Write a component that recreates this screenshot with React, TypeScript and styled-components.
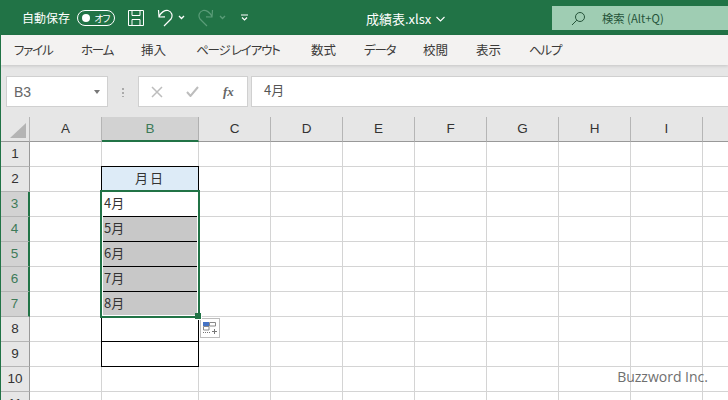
import React from 'react';
import styled, { createGlobalStyle } from 'styled-components';

const Global = createGlobalStyle`
  html, body { margin: 0; padding: 0; background: #fff; }
  body { font-family: "Noto Sans CJK JP", "Liberation Sans", sans-serif; }
`;
const Page = styled.div`
  width: 728px; height: 400px; overflow: hidden; position: relative; display: flex; flex-direction: column; background: #fff;
  border-left: 1px solid #217346; box-sizing: border-box;
`;
const TitleBar = styled.div`
  height: 35px; background: #217346; display: flex; align-items: center; color: #fff; flex: none;
`;
const AutoSave = styled.span`
  font-size: 12px; margin-left: 21px; width: 55px; white-space: nowrap; line-height: 34px;
`;
const Toggle = styled.span`
  width: 38px; height: 16px; border: 1px solid #fff; border-radius: 9px; box-sizing: border-box;
  display: flex; align-items: center; justify-content: space-between; padding: 0 4px 0 4px; font-size: 9.500px; font-feature-settings: "palt"; letter-spacing: -.5px;
  &::before { content: ""; width: 8px; height: 8px; background: #fff; border-radius: 50%; }
`;
const QatIcon = styled.svg<{ $ml: number }>`
  margin-left: ${p => p.$ml}px; flex: none; display: block;
`;
const FileName = styled.span`
  position: absolute; left: 365px; top: 0; font-size: 13px; line-height: 37px; display: flex; align-items: center; gap: 5px;
`;
const SearchBox = styled.div`
  position: absolute; left: 551px; top: 6px; width: 176px; height: 24px; background: #9fcdb3; color: #26543a;
  display: flex; align-items: center; font-size: 11.300px;
  & > span { margin-left: 16px; }
  & > svg { margin-left: 19px; }
`;
const Ribbon = styled.nav`
  height: 30px; background: #f3f2f1; display: flex; align-items: center; flex: none; font-size: 12.500px; color: #3b3a39;
  font-feature-settings: "palt"; box-shadow: 0 1px 3px rgba(0,0,0,.15); position: relative; z-index: 1;
`;
const Tab = styled.span<{ $w: number; $kana?: boolean }>`
  width: ${p => p.$w}px; flex: none; white-space: nowrap; line-height: 30px;
  letter-spacing: ${p => p.$kana ? '-1.2px' : '0'};
  &:first-child { margin-left: 13px; }
`;
const FormulaArea = styled.div`
  height: 52px; flex: none; background: #e6e6e6; display: flex; align-items: flex-start; padding-top: 11px; box-sizing: border-box;
`;
const NameBox = styled.div`
  width: 102px; height: 31px; margin-left: 5px; background: #fff; border: 1px solid #d0d0d0; box-sizing: border-box;
  display: flex; align-items: center; justify-content: space-between; padding: 1px 7px 0; font-size: 14px; color: #666; font-family: "Liberation Sans", sans-serif;
  &::after { content: ""; border: 3.500px solid transparent; border-top: 4px solid #777; border-bottom: 0; }
`;
const Dots = styled.div`
  width: 2px; height: 10px; margin: 11px 14px 0 14px; background: radial-gradient(circle, #aaa 1px, transparent 1px) 0 0 / 2px 4px;
`;
const FxBox = styled.div`
  width: 110px; height: 31px; background: #fff; border: 1px solid #d0d0d0; box-sizing: border-box; display: flex; align-items: center;
  padding-left: 12px; gap: 23px;
`;
const FxGlyph = styled.span`
  font-family: "Liberation Serif", serif; font-style: italic; font-weight: bold; font-size: 13px; color: #666; margin-left: 1px;
`;
const FormulaInput = styled.div`
  flex: 1; height: 31px; margin-left: 3px; background: #fff; border: 1px solid #d0d0d0; border-right: 0; box-sizing: border-box;
  font-size: 13px; color: #555; padding-left: 12px; line-height: 25px;
`;
const Sheet = styled.div`
  position: relative; flex: none; display: grid;
  grid-template-columns: 29px 72px 97px repeat(8, 72px);
  grid-template-rows: repeat(12, 25px);
`;
const Corner = styled.div`
  background: #e6e6e6; border-right: 1px solid #b5b5b5; border-bottom: 1px solid #999; box-sizing: border-box; position: relative;
  &::after { content: ""; position: absolute; right: 3px; bottom: 3px; width: 0; height: 0; border-style: solid; border-width: 0 0 15px 16px; border-color: transparent transparent #b4b4b4 transparent; }
`;
const ColHead = styled.div<{ $on?: boolean }>`
  background: ${p => p.$on ? '#d2d2d2' : '#e6e6e6'}; color: ${p => p.$on ? '#3d7a58' : '#333'};
  border-right: 1px solid ${p => p.$on ? '#b0b0b0' : '#b5b5b5'}; border-bottom: ${p => p.$on ? '2px solid #217346' : '1px solid #999'};
  box-sizing: border-box; font-size: 13.500px; font-family: "Liberation Sans", sans-serif; text-align: center; line-height: 24px;
`;
const RowHead = styled.div<{ $on?: boolean }>`
  background: ${p => p.$on ? '#d2d2d2' : '#e6e6e6'}; color: ${p => p.$on ? '#3d7a58' : '#333'};
  border-right: ${p => p.$on ? '2px solid #217346' : '1px solid #999'}; border-bottom: 1px solid #b5b5b5;
  box-sizing: border-box; font-size: 13.500px; font-family: "Liberation Sans", sans-serif; text-align: center; line-height: 24px;
`;
const Cell = styled.div<{ $fill?: string; $box?: boolean; $center?: boolean }>`
  background: ${p => p.$fill || '#fff'}; box-sizing: border-box; font-size: 13px; color: #333; line-height: 22px;
  padding-left: 2px; white-space: nowrap;
  border-right: 1px solid ${p => p.$box ? '#000' : '#d4d4d4'}; border-bottom: 1px solid ${p => p.$box ? '#000' : '#d4d4d4'};
  ${p => p.$box ? 'box-shadow: -1px 0 0 #000, 0 -1px 0 #000, -1px -1px 0 #000; position: relative;' : ''}
  ${p => p.$center ? 'text-align: center; letter-spacing: 2px; padding-left: 0;' : ''}
`;
const Selection = styled.div`
  position: absolute; grid-column: 3 / 4; grid-row: 4 / 9; top: -2px; left: -2px; right: -1px; bottom: -1px;
  border: 2px solid #217346; box-shadow: inset 0 0 0 1px #fff; pointer-events: none; z-index: 2;
  &::after { content: ""; position: absolute; right: -3px; bottom: -3px; width: 6px; height: 6px; background: #217346; box-shadow: 1px 1px 0 #fff; }
`;
const QuickAnalysis = styled.svg`
  position: absolute; grid-column: 4 / 5; grid-row: 9 / 10; left: 1px; top: 1px;
`;
const Watermark = styled.div`
  position: absolute; right: 20px; bottom: 14px; font-family: "Open Sans", "Liberation Sans", sans-serif; font-size: 14px; line-height: 18px; color: #6f6f6f; z-index: 3;
`;

const cols = ['A','B','C','D','E','F','G','H','I',''];
const months: Record<number,string> = { 3: '4月', 4: '5月', 5: '6月', 6: '7月', 7: '8月' };

export default function App() {
  const rows = Array.from({ length: 11 }, (_, i) => i + 1);
  return (
    <Page>
      <Global />
      <TitleBar>
        <AutoSave>自動保存</AutoSave>
        <Toggle>オフ</Toggle>
        <QatIcon $ml={13} width="16" height="16" viewBox="0 0 16 16" fill="none" stroke="#fff" strokeWidth="1">
          <path d="M.5.5h15v15H.5zM4 .5v5h8v-5M4 15.5v-6h8v6" />
        </QatIcon>
        <QatIcon $ml={13} width="16" height="18" viewBox="0 0 16 18" fill="none" stroke="#fff" strokeWidth="1.200">
          <path d="M1.500 1 2 8l6-.2M2 7.500C4 3 8 1 11 1.500 15 2.500 16 7 14 10L7 17" />
        </QatIcon>
        <QatIcon $ml={5} width="7" height="5" viewBox="0 0 7 5" fill="none" stroke="#fff" strokeWidth="1.300">
          <path d="M1 1 3.500 3.500 6 1" />
        </QatIcon>
        <QatIcon $ml={13} width="16" height="18" viewBox="0 0 16 18" fill="none" stroke="#5a9c78" strokeWidth="1.200">
          <path d="M14.500 1 14 8l-6-.2M14 7.500C12 3 8 1 5 1.500 1 2.500 0 7 2 10l7 7" />
        </QatIcon>
        <QatIcon $ml={5} width="7" height="5" viewBox="0 0 7 5" fill="none" stroke="#5a9c78" strokeWidth="1.300">
          <path d="M1 1 3.500 3.500 6 1" />
        </QatIcon>
        <QatIcon $ml={15} width="7" height="7" viewBox="0 0 7 7" fill="none" stroke="#fff" strokeWidth="1.200">
          <path d="M0 1h7M1 3.500l2.500 2.500L6 3.500" />
        </QatIcon>
        <FileName>
          成績表.xlsx
          <svg width="9" height="6" viewBox="0 0 9 6" fill="none" stroke="#fff" strokeWidth="1.100"><path d="M.5 1 4.500 5 8.500 1" /></svg>
        </FileName>
        <SearchBox>
          <svg width="15" height="15" viewBox="0 0 15 15" fill="none" stroke="#26543a" strokeWidth="1"><circle cx="9" cy="6" r="4.500" /><path d="M5.800 9.200 1 14" /></svg>
          <span>検索 (Alt+Q)</span>
        </SearchBox>
      </TitleBar>
      <Ribbon>
        <Tab $w={67} $kana>ファイル</Tab>
        <Tab $w={60} $kana>ホーム</Tab>
        <Tab $w={55}>挿入</Tab>
        <Tab $w={115} $kana>ページ レイアウト</Tab>
        <Tab $w={53}>数式</Tab>
        <Tab $w={59} $kana>データ</Tab>
        <Tab $w={53}>校閲</Tab>
        <Tab $w={53}>表示</Tab>
        <Tab $w={50} $kana>ヘルプ</Tab>
      </Ribbon>
      <FormulaArea>
        <NameBox>B3</NameBox>
        <Dots />
        <FxBox>
          <svg width="12" height="12" viewBox="0 0 12 12" fill="none" stroke="#bdbdbd" strokeWidth="1.500"><path d="M1 1l10 10M11 1 1 11" /></svg>
          <svg width="13" height="11" viewBox="0 0 13 11" fill="none" stroke="#bdbdbd" strokeWidth="2"><path d="M1 6l3.500 4L12 1" /></svg>
          <FxGlyph>fx</FxGlyph>
        </FxBox>
        <FormulaInput>4月</FormulaInput>
      </FormulaArea>
      <Sheet>
        <Corner />
        {cols.map((c, i) => <ColHead key={i} $on={c === 'B'}>{c}</ColHead>)}
        {rows.map(r => (
          <React.Fragment key={r}>
            <RowHead $on={r >= 3 && r <= 7}>{r}</RowHead>
            {cols.map((c, i) => {
              if (c !== 'B') return <Cell key={i} />;
              if (r === 2) return <Cell key={i} $box $center $fill="#ddebf7">月日</Cell>;
              if (r >= 3 && r <= 9) return <Cell key={i} $box $fill={r >= 4 && r <= 7 ? '#c8c8c8' : '#fff'}>{months[r]}</Cell>;
              return <Cell key={i} />;
            })}
          </React.Fragment>
        ))}
        <Selection />
        <QuickAnalysis width="20" height="20" viewBox="0 0 20 20" fill="none">
          <rect x=".5" y=".5" width="19" height="19" fill="#fff" stroke="#bdbdbd" />
          <rect x="3" y="4" width="6" height="4" fill="#4472c4" />
          <path d="M9.500 4.500h6v3.500h-6zM3.500 8.500h5.500v3.500h-5.500z" stroke="#888" />
          <path d="M3 14.500h7" stroke="#777" strokeDasharray="1 1" />
          <path d="M14.500 11v5M12 13.500h5" stroke="#777" />
        </QuickAnalysis>
      </Sheet>
      <Watermark>Buzzword Inc.</Watermark>
    </Page>
  );
}
